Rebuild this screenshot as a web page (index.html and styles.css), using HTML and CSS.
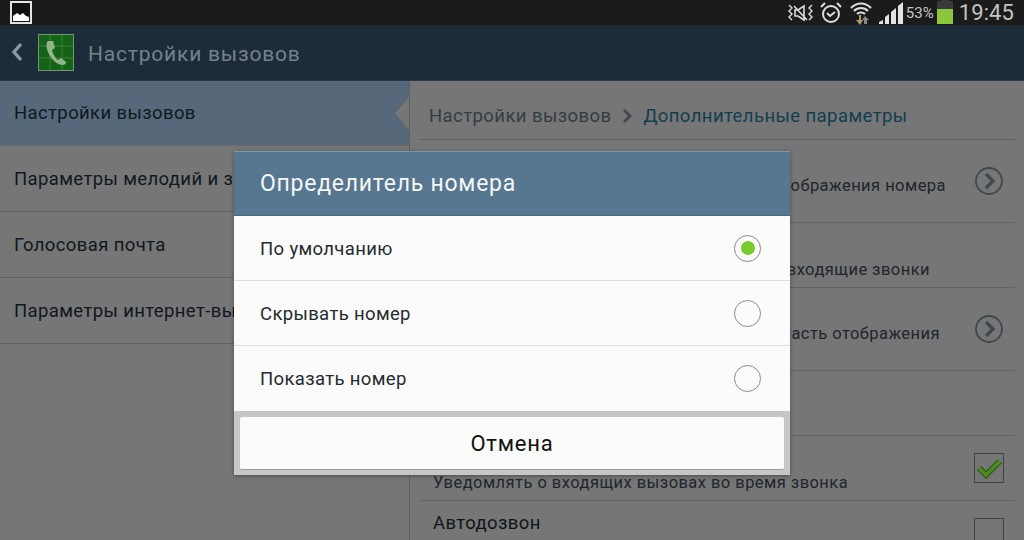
FILE: index.html
```html
<!DOCTYPE html>
<html lang="ru">
<head>
  <meta charset="UTF-8">
  <title>Настройки вызовов</title>
  <link rel="stylesheet" href="styles.css">
</head>
<body>
  <div class="status-bar">
    <svg class="pic-icon" width="22" height="23" viewBox="0 0 22 23">
      <rect x="1" y="1" width="20" height="21" fill="#111" stroke="#e4e4e4" stroke-width="2"/>
      <path d="M3 20v-5l4-3 3 2 3-2 3 3 3 1v4z" fill="#fff"/>
    </svg>
    <div class="status-right">
      <svg width="25" height="20" viewBox="0 0 25 20" fill="none" stroke="#ddd">
        <path d="M1 2l3 3-3 3 3 3-3 3 3 3M24 2l-3 3 3 3-3 3 3 3-3 3" stroke-width="1.4"/>
        <path d="M7 7h3l6-4v14l-6-4H7zM6 3l13 14" stroke-width="1.6"/>
      </svg>
      <svg width="24" height="24" viewBox="0 0 24 24" fill="none" stroke="#ddd" stroke-width="2">
        <circle cx="12" cy="13" r="8"/>
        <path d="M8 12l3 3 5-4M2 6l4-4M22 6l-4-4"/>
      </svg>
      <svg width="24" height="25" viewBox="0 0 24 25" fill="none">
        <path d="M2 8c6-6 14-6 20 0M5 11c4-4 10-4 14 0M8 14c2-2 6-2 8 0" stroke="#ddd" stroke-width="2.2"/>
        <path d="M10 15v5H7l4 5 3-5h-2v-5z" fill="#b89a6a"/>
        <path d="M16 16l-3 4h2v4h3v-4h2z" fill="#8a8a8a"/>
      </svg>
      <svg class="signal" width="24" height="22" viewBox="0 0 24 22" fill="#e4e4e4">
        <path d="M0 20l4-2v4H0zM6 15l4-3v10H6zM12 10l5-4v16h-5zM19 4l5-4v22h-5z"/>
      </svg>
      <span class="battery-pct">53%</span>
      <div class="battery"><div class="battery-cap"></div><div class="battery-fill"></div></div>
      <span class="clock">19:45</span>
    </div>
  </div>

  <div class="action-bar">
    <svg class="back" width="12" height="20" viewBox="0 0 12 20" fill="none" stroke="#8c99a3" stroke-width="3.4">
      <path d="M10 2L3 10l7 8"/>
    </svg>
    <svg class="app-icon" width="36" height="37" viewBox="0 0 36 37">
      <rect x="0.5" y="0.5" width="35" height="36" fill="#156318" stroke="#76946f"/>
      <path d="M12 1v35M24 1v35M1 12h34M1 24h34" stroke="#3a8236" stroke-width="1"/>
      <path d="M10 7c-2 2-2 6 0 11 3 7 8 12 14 13 3 0 4-1 4-3l-5-4-3 2c-3-2-5-6-6-10l3-2-2-7z" fill="#94b48c"/>
    </svg>
    <span class="action-title">Настройки вызовов</span>
  </div>

  <div class="content">
    <ul class="side-list">
      <li class="side-item selected">Настройки вызовов</li>
      <li class="side-item">Параметры мелодий и звука</li>
      <li class="side-item">Голосовая почта</li>
      <li class="side-item">Параметры интернет-вызова</li>
    </ul>

    <div class="detail">
      <div class="crumbs">
        <span>Настройки вызовов</span>
        <svg width="10" height="14" viewBox="0 0 10 14" fill="none" stroke="#3d4850" stroke-width="2.6"><path d="M2 1l6 6-6 6"/></svg>
        <span class="crumb-current">Дополнительные параметры</span>
      </div>
      <div class="row row-a">
        <span class="row-sub end">Параметры отображения номера</span>
        <svg class="arrow" width="30" height="30" viewBox="0 0 30 30" fill="none" stroke="#3f484e">
          <circle cx="15" cy="15" r="13" stroke-width="1.8"/>
          <path d="M12 8l7 7-7 7" stroke-width="3.2"/>
        </svg>
      </div>
      <div class="row row-b">
        <span class="row-sub end low">Отклонять входящие звонки</span>
      </div>
      <div class="row row-a">
        <span class="row-sub end wide">Область отображения</span>
        <svg class="arrow" width="30" height="30" viewBox="0 0 30 30" fill="none" stroke="#3f484e">
          <circle cx="15" cy="15" r="13" stroke-width="1.8"/>
          <path d="M12 8l7 7-7 7" stroke-width="3.2"/>
        </svg>
      </div>
      <div class="row row-b"></div>
      <div class="row row-b">
        <div class="row-sub notify">Уведомлять о входящих вызовах во время звонка</div>
        <div class="check">
          <svg width="26" height="22" viewBox="0 0 26 22" fill="none">
            <path d="M3 11l7 7L24 4" stroke="#2f5a1a" stroke-width="6"/>
            <path d="M3 11l7 7L24 4" stroke="#4f8a22" stroke-width="3.4"/>
          </svg>
        </div>
      </div>
      <div class="row row-last">
        <div class="row-title">Автодозвон</div>
        <div class="check"></div>
      </div>
    </div>
  </div>

  <div class="dialog">
    <div class="dialog-head">Определитель номера</div>
    <div class="option">По умолчанию<span class="radio on"></span></div>
    <div class="option">Скрывать номер<span class="radio"></span></div>
    <div class="option last">Показать номер<span class="radio"></span></div>
    <div class="dialog-foot">
      <div class="cancel">Отмена</div>
    </div>
  </div>
</body>
</html>
```

FILE: styles.css
```css
* {
  box-sizing: border-box;
}

body {
  margin: 0;
  width: 1024px;
  height: 540px;
  overflow: hidden;
  position: relative;
  background-color: #767676;
  font-family: Roboto, sans-serif;
}

.status-bar {
  height: 25px;
  background-color: #1b1b1b;
  display: flex;
  align-items: center;
  justify-content: space-between;
  padding-left: 10px;
  padding-right: 10px;
}

.pic-icon {
  display: block;
}

.status-right {
  display: flex;
  align-items: center;
  gap: 6px;
  color: #c4c4c4;
}

.battery-pct {
  font-size: 15px;
  margin-left: -3px;
}

.battery {
  width: 16px;
  height: 23px;
  margin-left: -3px;
  display: flex;
  flex-direction: column;
  align-items: center;
  background-color: #3a3a3a;
  justify-content: flex-end;
  position: relative;
}

.battery-cap {
  position: absolute;
  top: -2px;
  width: 8px;
  height: 3px;
  background-color: #3a3a3a;
}

.battery-fill {
  width: 100%;
  height: 15px;
  background-color: #8cc63a;
}

.clock {
  font-size: 22px;
  letter-spacing: 0.1px;
}

.action-bar {
  height: 56px;
  background-color: #1c2c38;
  display: flex;
  align-items: center;
  padding-left: 11px;
  border-bottom: 1px solid #2b3a46;
}

.back {
  margin-right: 15px;
  margin-top: -2px;
}

.app-icon {
  margin-right: 14px;
  margin-top: -1px;
}

.action-title {
  color: #76828b;
  font-size: 21px;
  letter-spacing: 0.8px;
  margin-top: 2px;
}

.content {
  height: 459px;
  display: flex;
}

.side-list {
  list-style: none;
  margin: 0;
  padding: 0;
  width: 409px;
}

.side-item {
  height: 66px;
  padding-left: 14px;
  display: flex;
  align-items: center;
  font-size: 18.5px;
  letter-spacing: 0.38px;
  color: #10181f;
  border-bottom: 1px solid #626262;
}

.side-item.selected {
  height: 65px;
  background-color: #56687a;
  border-bottom-color: #6a6a6a;
}

.detail {
  width: 615px;
  padding-left: 10px;
  padding-right: 9px;
  border-left: 1px solid #5e5e5e;
  position: relative;
}

/* notch of the selected item */
.detail::before {
  content: "";
  position: absolute;
  left: -15px;
  top: 16px;
  width: 14px;
  height: 33px;
  background-color: #767676;
  clip-path: polygon(100% 0, 0 50%, 100% 100%);
}

.crumbs {
  height: 59px;
  display: flex;
  align-items: center;
  gap: 11px;
  padding-left: 9px;
  padding-top: 11px;
  font-size: 18.5px;
  letter-spacing: 0.42px;
  color: #343c43;
  border-bottom: 1px solid #5f5f5f;
}

.crumb-current {
  color: #123e4e;
}

.row {
  display: flex;
  align-items: center;
  justify-content: space-between;
  padding-left: 13px;
  padding-right: 11px;
  border-bottom: 1px solid #646464;
}

.row-a {
  height: 83px;
  padding-top: 8px;
}

.row-b {
  height: 65px;
}

.row-last {
  height: 39px;
  align-items: flex-start;
  border-bottom: none;
}

.row-title {
  margin-top: 11px;
  font-size: 18.5px;
  letter-spacing: 0.4px;
  color: #10151a;
}

.row-sub {
  font-size: 16.5px;
  letter-spacing: 0.45px;
  color: #20262c;
}

.row-sub.notify {
  align-self: flex-end;
  padding-bottom: 8px;
}

.row-sub.end {
  flex: 1;
  text-align: right;
  margin-right: 28px;
  padding-top: 1px;
}

.row-sub.wide {
  margin-right: 34px;
}

.row-sub.low {
  align-self: flex-end;
  padding-bottom: 8px;
  margin-right: 74px;
}

.arrow {
  margin-top: -8px;
  flex-shrink: 0;
}

.check {
  width: 30px;
  height: 30px;
  flex-shrink: 0;
  border: 1px solid #3e4347;
  display: flex;
  align-items: center;
  justify-content: center;
}

.row-last .check {
  margin-top: 17px;
}

.dialog {
  position: absolute;
  left: 234px;
  top: 151px;
  width: 556px;
  height: 324px;
  box-shadow: 0 1px 4px rgba(0, 0, 0, 0.35);
}

.dialog-head {
  height: 65px;
  padding-left: 26px;
  display: flex;
  align-items: center;
  font-size: 23px;
  letter-spacing: 0.75px;
  color: #f4f6f7;
  background-color: #56778f;
  border-top: 1px solid #7f96a8;
  border-bottom: 1px solid #4b677c;
}

.option {
  height: 65px;
  padding-left: 26px;
  padding-right: 29px;
  padding-top: 1px;
  display: flex;
  align-items: center;
  justify-content: space-between;
  font-size: 18.5px;
  letter-spacing: 0.35px;
  color: #262b30;
  background-color: #fbfbfb;
  border-bottom: 1px solid #dedede;
}

.option.last {
  border-bottom: none;
}

.radio {
  width: 27px;
  height: 27px;
  margin-top: -1px;
  border-radius: 50%;
  border: 1px solid #8a8a8a;
  display: flex;
  align-items: center;
  justify-content: center;
}

.radio.on::after {
  content: "";
  width: 14px;
  height: 14px;
  border-radius: 50%;
  background-color: #7ac92e;
}

.dialog-foot {
  height: 64px;
  padding: 6px;
  background-color: #c6c6c6;
}

.cancel {
  height: 53px;
  display: flex;
  align-items: center;
  justify-content: center;
  font-size: 22px;
  letter-spacing: 0.8px;
  color: #111;
  background-color: #fbfbfb;
  border-radius: 2px;
  border-bottom: 1px solid #9a9a9a;
}
```
